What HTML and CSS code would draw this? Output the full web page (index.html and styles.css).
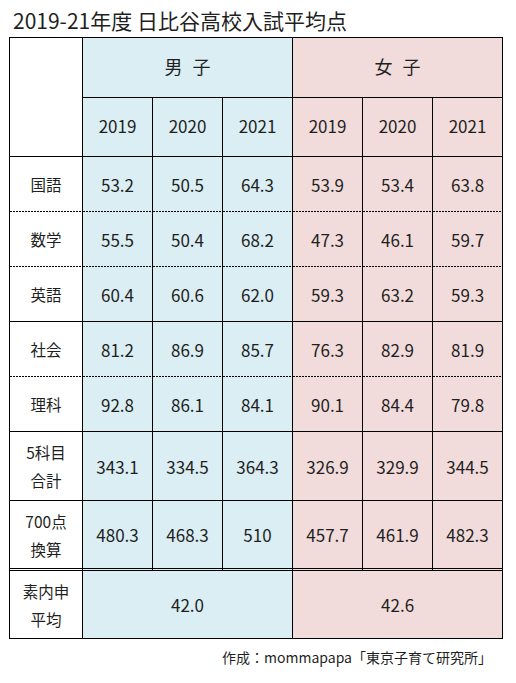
FILE: index.html
```html
<!DOCTYPE html>
<html lang="ja">
<head>
    <meta charset="UTF-8">
    <meta name="viewport" content="width=device-width, initial-scale=1.0">
    <title>2019-21年度 日比谷高校入試平均点</title>
    <link rel="stylesheet" href="styles.css">
</head>
<body>
    <h1 class="title">2019-21年度 日比谷高校入試平均点</h1>
    <table class="scores">
        <colgroup>
            <col class="col-label">
            <col span="6" class="col-num">
        </colgroup>
        <tr class="head-top">
            <td rowspan="2" class="label"></td>
            <td colspan="3" class="boys">男 子</td>
            <td colspan="3" class="girls">女 子</td>
        </tr>
        <tr class="head-year">
            <td class="boys">2019</td><td class="boys">2020</td><td class="boys">2021</td>
            <td class="girls">2019</td><td class="girls">2020</td><td class="girls">2021</td>
        </tr>
        <tr class="subject dot-below">
            <td class="label">国語</td>
            <td class="boys">53.2</td><td class="boys">50.5</td><td class="boys">64.3</td>
            <td class="girls">53.9</td><td class="girls">53.4</td><td class="girls">63.8</td>
        </tr>
        <tr class="subject dot-below">
            <td class="label">数学</td>
            <td class="boys">55.5</td><td class="boys">50.4</td><td class="boys">68.2</td>
            <td class="girls">47.3</td><td class="girls">46.1</td><td class="girls">59.7</td>
        </tr>
        <tr class="subject">
            <td class="label">英語</td>
            <td class="boys">60.4</td><td class="boys">60.6</td><td class="boys">62.0</td>
            <td class="girls">59.3</td><td class="girls">63.2</td><td class="girls">59.3</td>
        </tr>
        <tr class="subject dot-below">
            <td class="label">社会</td>
            <td class="boys">81.2</td><td class="boys">86.9</td><td class="boys">85.7</td>
            <td class="girls">76.3</td><td class="girls">82.9</td><td class="girls">81.9</td>
        </tr>
        <tr class="subject">
            <td class="label">理科</td>
            <td class="boys">92.8</td><td class="boys">86.1</td><td class="boys">84.1</td>
            <td class="girls">90.1</td><td class="girls">84.4</td><td class="girls">79.8</td>
        </tr>
        <tr class="total">
            <td class="label">5科目<br>合計</td>
            <td class="boys">343.1</td><td class="boys">334.5</td><td class="boys">364.3</td>
            <td class="girls">326.9</td><td class="girls">329.9</td><td class="girls">344.5</td>
        </tr>
        <tr class="total converted">
            <td class="label">700点<br>換算</td>
            <td class="boys">480.3</td><td class="boys">468.3</td><td class="boys">510</td>
            <td class="girls">457.7</td><td class="girls">461.9</td><td class="girls">482.3</td>
        </tr>
        <tr class="naishin">
            <td class="label">素内申<br>平均</td>
            <td colspan="3" class="boys">42.0</td>
            <td colspan="3" class="girls">42.6</td>
        </tr>
    </table>
    <p class="credit">作成：mommapapa「東京子育て研究所」</p>
</body>
</html>
```

FILE: styles.css
```css
body {
    margin: 0;
    background: #fff;
    color: #1f1f1f;
    font-family: "Noto Sans CJK JP", "Noto Sans", sans-serif;
}
.title {
    margin: 0;
    padding: 7px 0 0 13px;
    height: 30px;
    font-size: 21px;
    font-weight: normal;
    line-height: 26px;
}
.scores {
    margin-left: 9px;
    border-collapse: separate;
    border-spacing: 0;
    table-layout: fixed;
    width: 494px;
    border-top: 1px solid #000;
    border-left: 1px solid #000;
}
.col-label {
    width: 73px;
}
.col-num {
    width: 70px;
}
.scores td {
    border-right: 1px solid #000;
    border-bottom: 1px solid #000;
    padding: 0;
    text-align: center;
    font-size: 17px;
}
.scores td.label {
    background-color: #fff;
    font-size: 15.5px;
    line-height: 28px;
}
.boys {
    background-color: #daeef3;
}
.girls {
    background-color: #f2dcdb;
}
.head-top {
    height: 60px;
}
.head-top td {
    font-size: 18px;
    word-spacing: 6px;
    padding-bottom: 4px;
}
.head-year {
    height: 59px;
}
.head-year td {
    padding-bottom: 3px;
}
.subject {
    height: 55px;
}
/* dotted rule drawn by hand so the 2-on / 1-off dash of the sheet shows */
.scores .dot-below td {
    border-bottom-color: transparent;
    background-image: repeating-linear-gradient(to right, #000 0 2px, transparent 2px 3px);
    background-size: 100% 1px;
    background-repeat: no-repeat;
    background-origin: border-box;
    background-position: left bottom;
}
.total {
    height: 69px;
}
.converted {
    height: 70px;
}
.scores .converted td {
    border-bottom: 3px double #000;
}
.naishin {
    height: 68px;
}
.credit {
    margin: 8px 0 0;
    padding-right: 24px;
    text-align: right;
    font-size: 14px;
}
```
